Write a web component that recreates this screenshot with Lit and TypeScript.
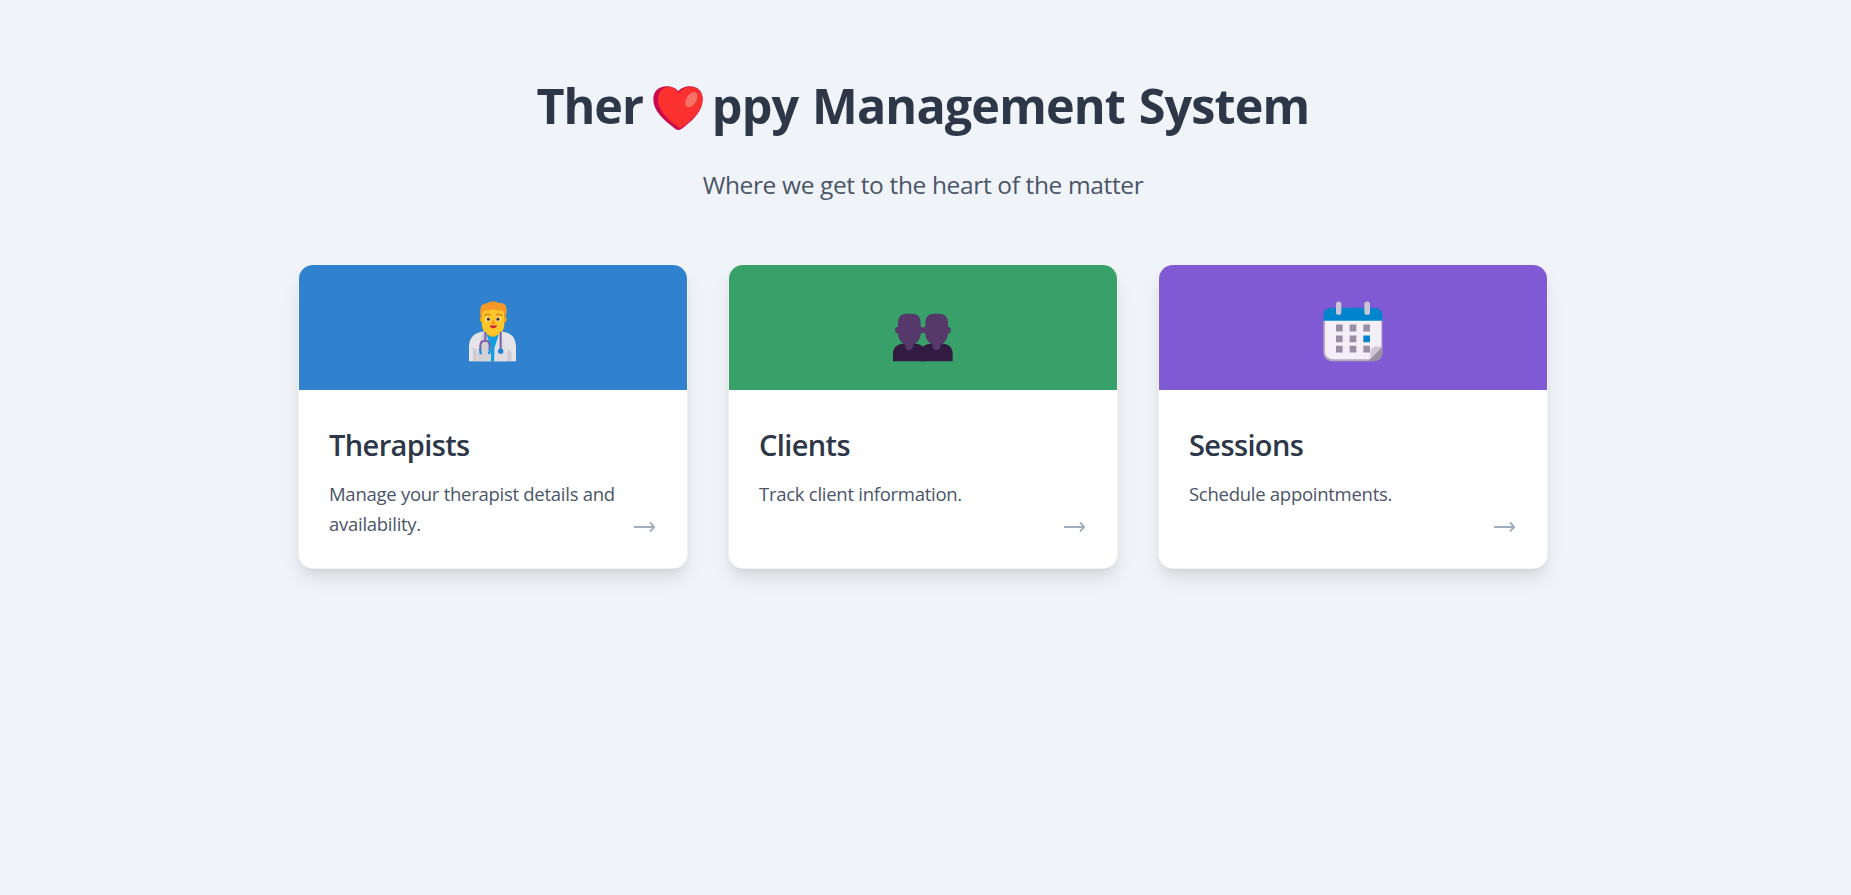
import { LitElement, html, svg, css, type TemplateResult } from "lit";
import { customElement, property } from "lit/decorators.js";

const doctor = html`<svg viewBox="-6 -7.5 240 240" width="80" height="80" aria-hidden="true">
  <path d="M42 212v-42c0-24 12-41 33-45l20-4h36l20 4c21 4 32 21 32 45v42z" fill="#e6e4e7" />
  <path d="M66 212h-12v-33l-6-9 18 6zM157 176l12 8v28h-12z" fill="#cfccd3" />
  <path d="M93 122l20 14 20-14 7 3-18 47-4 40h-10l-4-40-17-47z" fill="#0f9fe0" />
  <path d="M98 108h31v19c0 16-31 16-31 0z" fill="#f9a800" />
  <path d="M82 124l9-3 17 52v39H68v-24z" fill="#d3d0d6" />
  <path d="M135 121l-17 52v39h38l-4-40z" fill="#dfdde1" />
  <path d="M82 78c-10 1-10 18 1 18zM148 78c10 1 10 18-1 18z" fill="#f7a600" />
  <path d="M81 52h67v50c0 19-14 34-33.500 34S81 121 81 102z" fill="#ffc62c" />
  <path d="M77 80c-2-10-2-20 0-28 2-9 9-13 17-13 9-8 30-8 38-1 14-2 23 6 23 20 0 7-1 14-3 22h-4V70c0-6-4-9-10-9-11 0-16-4-25-4-10 0-12 4-22 4-6 0-9 3-9 9v10z" fill="#f59a28" />
  <path d="M90 75c4-5 10-5 15-2M125 73c5-3 11-3 15 2" fill="none" stroke="#d87a22" stroke-width="4" stroke-linecap="round" />
  <circle cx="99" cy="86" r="6.500" fill="#fff" /><circle cx="130" cy="86" r="6.500" fill="#fff" />
  <circle cx="100" cy="86" r="4.800" fill="#44301f" /><circle cx="129" cy="86" r="4.800" fill="#44301f" />
  <path d="M114.500 87l-6 14h12z" fill="#f58a20" />
  <path d="M104 105h22c-2 11-20 11-22 0z" fill="#c72038" />
  <path d="M91 127v24M137 127v50" fill="none" stroke="#7a5ea8" stroke-width="6" stroke-linecap="round" />
  <path d="M76 180v-13c0-10 6-16 14.500-16s13.500 6 13.500 16v13" fill="none" stroke="#7a5ea8" stroke-width="6" />
  <path d="M73 174v13c0 3 2 4 8 4v-5h-2v-12zM107 174v13c0 3-2 4-8 4v-5h2v-12z" fill="#168bdc" />
  <circle cx="137" cy="182" r="8" fill="#1b80d6" />
</svg>`;

const bust = (dx: number) => svg`<g transform="translate(${dx} 0)">
  <path d="M39 212v-22c0-18 12-29 32-30h34c20 1 31 12 31 30v22z" fill="#321b41" />
  <path d="M76 150h23v19c0 14-23 14-23 0z" fill="#56396a" />
  <path d="M54 109V96c0-16 11-26 26-26h16c15 0 26 10 26 26v13c12 0 12 20 0 20-1 20-14 36-34 36s-33-16-34-36c-12 0-12-20 0-20z" fill="#56396a" />
</g>`;

const people = html`<svg viewBox="9 -7.5 240 240" width="80" height="80" aria-hidden="true">
  ${bust(0)}${bust(82)}
</svg>`;

const calendar = html`<svg viewBox="9 -7.5 240 240" width="80" height="80" aria-hidden="true">
  <path d="M40 84h177v102c0 14-12 26-26 26H66c-14 0-26-12-26-26z" fill="#b5a8be" />
  <path d="M45 84h169v100c0 12-10 22-22 22H68c-13 0-23-10-23-22z" fill="#f3eef8" />
  <path d="M40 91V76c0-14 10-24 24-24h129c14 0 24 10 24 24v15z" fill="#0084ce" />
  <rect x="78" y="33" width="16" height="40" rx="8" fill="#cdc4d6" />
  <rect x="163" y="33" width="17" height="40" rx="8" fill="#cdc4d6" />
  <path d="M78 102h20v21H78zM119 102h20v21h-20zM160 102h20v21h-20zM78 135h20v20H78zM119 135h20v20h-20zM78 166h20v20H78zM119 166h20v20h-20zM160 166h20v20h-20z" fill="#998ea4" />
  <path d="M160 135h20v20h-20z" fill="#0084ce" />
  <path d="M217 168v20c0 14-11 24-25 24h-18z" fill="#998ea4" />
  <path d="M174 210c6-8 8-12 8-24 0-11 7-18 18-18h17z" fill="#cdc4d6" />
</svg>`;

interface Section {
  title: string;
  text: string;
  tone: string;
  icon: TemplateResult;
}

const sections: Section[] = [
  { title: "Therapists", text: "Manage your therapist details and availability.", tone: "blue", icon: doctor },
  { title: "Clients", text: "Track client information.", tone: "green", icon: people },
  { title: "Sessions", text: "Schedule appointments.", tone: "purple", icon: calendar },
];

@customElement("section-card")
export class SectionCard extends LitElement {
  @property({ attribute: false }) section!: Section;

  static styles = css`
    :host {
      display: flex;
      flex-direction: column;
      box-sizing: border-box;
      overflow: hidden;
      border: 1px solid rgba(0, 0, 0, 0.05);
      border-radius: 15px;
      background: #fff;
      box-shadow: 0 12.5px 18.75px -3.75px rgba(0, 0, 0, 0.1), 0 5px 7.5px -2.5px rgba(0, 0, 0, 0.05);
    }
    .banner {
      display: flex;
      align-items: center;
      justify-content: center;
      height: 125px;
    }
    .banner svg { display: block; }
    .blue { background: #3182ce; }
    .green { background: #38a169; }
    .purple { background: #805ad5; }
    .body {
      flex: 1;
      display: flex;
      flex-direction: column;
      padding: 37px 32px 29px 30px;
    }
    h2 {
      margin: 0 0 16px;
      font-size: 29px;
      font-weight: 600;
      line-height: 36px;
      letter-spacing: -0.62px;
      color: #2d3748;
    }
    .row { flex: 1; display: flex; align-items: stretch; }
    p {
      flex: 1;
      margin: 0;
      font-size: 18.5px;
      line-height: 30px;
      letter-spacing: -0.27px;
      color: #4a5568;
    }
    .arrow { align-self: flex-end; display: block; margin-bottom: 6px; }
  `;

  render() {
    const { title, text, tone, icon } = this.section;
    return html`
      <div class="banner ${tone}">${icon}</div>
      <div class="body">
        <h2>${title}</h2>
        <div class="row">
          <p>${text}</p>
          <svg class="arrow" width="21" height="12" viewBox="0 0 21 12" aria-hidden="true">
            <path d="M0 6h20M16 1.4L20.2 6 16 10.6" fill="none" stroke="#a0aec0" stroke-width="2" />
          </svg>
        </div>
      </div>
    `;
  }
}

@customElement("app-root")
export class AppRoot extends LitElement {
  static styles = css`
    :host {
      display: block;
      box-sizing: border-box;
      min-height: 100vh;
      padding: 75px 5px 0 0;
      background: #f0f4f8;
      font-family: "Segoe UI", "Open Sans", "Noto Sans", sans-serif;
    }
    h1 {
      display: flex;
      justify-content: center;
      margin: 0 0 30px;
      font-size: 48.5px;
      font-weight: 700;
      line-height: 60px;
      letter-spacing: -0.85px;
      word-spacing: 2px;
      color: #2d3748;
      white-space: pre;
    }
    .first { letter-spacing: -1.1px; }
    .heart { margin: 10px 9px 0 10px; }
    .tagline {
      margin: 0 0 59px;
      font-size: 24.5px;
      line-height: 40px;
      letter-spacing: -0.36px;
      text-align: center;
      color: #4a5568;
    }
    .grid {
      display: grid;
      grid-template-columns: repeat(3, 390px);
      justify-content: center;
      gap: 40px;
    }
  `;

  render() {
    return html`
      <h1><span class="first">Ther</span><svg class="heart" width="50" height="46" viewBox="398 47 150 138" aria-hidden="true">
          <path d="M474 182C468 182 463 177 457 172C430 152 399 125 399 90C399 66 415 51 439 51C456 51 468 58 474 66C481 58 492 51 508 51C532 51 547 66 547 89C547 125 518 152 492 172C486 177 480 182 474 182Z" fill="#ca0b4a" />
          <path d="M477 175C448 156 413 126 413 90C413 68 425 54 445 53C460 53 470 61 475 72C482 60 494 53 509 53C532 53 547 67 547 90C547 124 516 151 489 171C485 174 481 177 477 175Z" fill="#fa312e" />
          <ellipse cx="513" cy="91" rx="15" ry="25" transform="rotate(32 513 91)" fill="#f37366" />
        </svg><span>ppy Management System</span></h1>
      <p class="tagline">Where we get to the heart of the matter</p>
      <main class="grid">
        ${sections.map((s) => html`<section-card .section=${s}></section-card>`)}
      </main>
    `;
  }
}
